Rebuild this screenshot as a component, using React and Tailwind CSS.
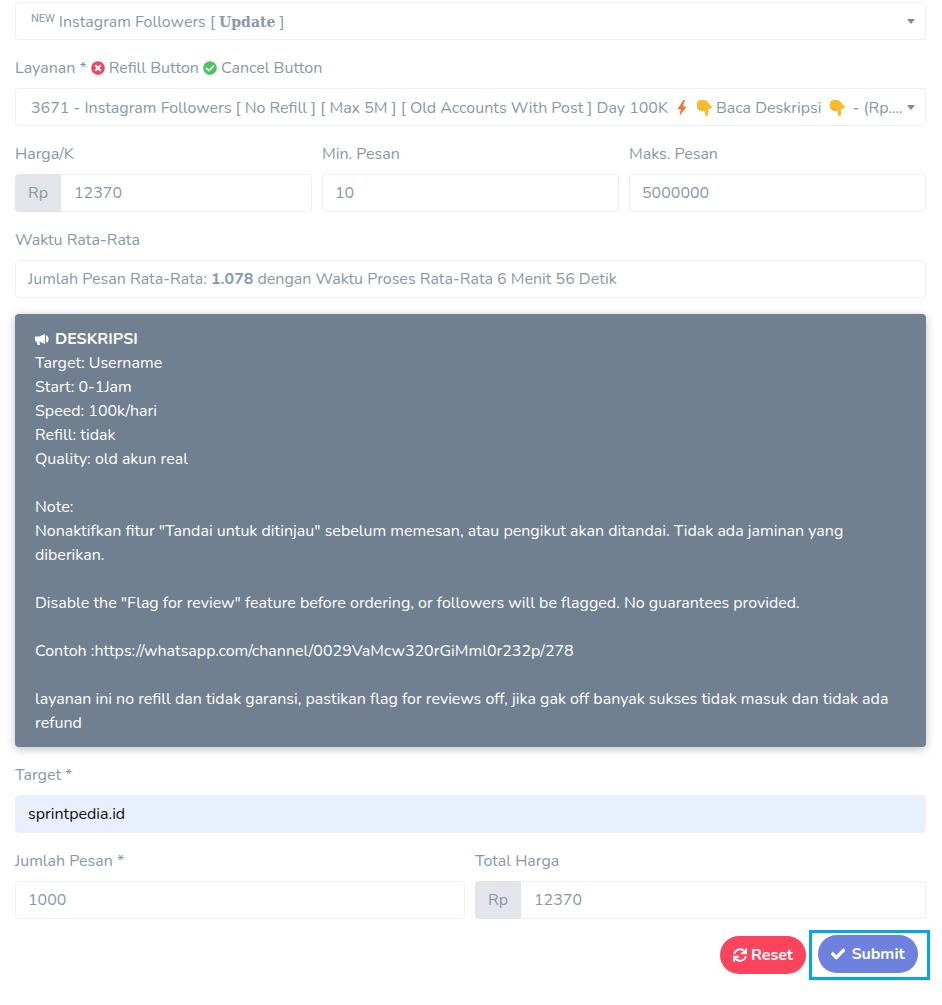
import React from 'react';
import { FaTimesCircle, FaCheckCircle, FaSync, FaCheck } from 'react-icons/fa';

const labelCls = 'block text-[#8898aa] text-[16px] leading-[22px] mb-[9px]';
const fieldCls = 'h-[38px] flex items-center border border-[#edf0f5] rounded-[4px] text-[#8898aa] text-[16px] px-3 min-w-0';

function Caret() {
  return <span className="absolute right-[10px] top-[16px] w-0 h-0 border-x-[4px] border-x-transparent border-t-[5px] border-t-[#888888]" />;
}

function Bolt() {
  return (
    <svg viewBox="0 0 10 16" className="w-[10px] h-[16px] ml-[9px] mr-[9px] inline-block shrink-0">
      <path d="M6.5 0 L0.5 9 L3.8 9 L2.5 16 L9.5 6.5 L5.8 6.5 L8 0 Z" fill="#f4732a" />
    </svg>
  );
}

function HandDown() {
  return (
    <svg viewBox="0 0 16 16" className="w-[16px] h-[16px] inline-block shrink-0">
      <path d="M1 3 C1 1 3 0 5 0 L8 0 C10 0 11 1 12 2.5 L16 7 C16 8.5 14 9 12 9 L12 14.5 C12 16.5 9 16.5 9 14.5 L9 11 C5 11 2 10.5 1 8 Z" fill="#fcbb2f" />
      <path d="M3.5 8 v2 M6 8.5 v2" stroke="#e29a12" strokeWidth="0.8" />
    </svg>
  );
}

function Megaphone() {
  return (
    <svg viewBox="0 0 14 11" className="w-[14px] h-[11px] mr-[6px] shrink-0" fill="#ffffff">
      <path d="M0 2.5 H4.5 L10 0 V10 L4.5 7.5 H4.3 L5.2 11 H2.6 L1.7 7.5 H0 Z" />
      <path d="M11 1 C14.5 2.5 14.5 7.5 11 9 Z" />
    </svg>
  );
}

function RpInput({ value }) {
  return (
    <div className="flex">
      <div className="h-[38px] w-[46px] shrink-0 flex items-center justify-center bg-[#e3e5ea] border border-[#e3e5ea] rounded-l-[4px] text-[#8898aa] text-[16px]">Rp</div>
      <div className={`${fieldCls} flex-1 rounded-l-none border-l-0 pl-[13px]`}>{value}</div>
    </div>
  );
}

export default function App() {
  return (
    <div className="bg-white min-h-[1005px] pl-[15px] pr-[16px] pt-[2px] font-['Nunito','Lato','Noto_Sans',sans-serif]">
      <div className={`${fieldCls} relative px-[15px] pt-[2px]`}>
        <span className="font-['Roboto',sans-serif] text-[11px] leading-none -translate-y-[4px] mr-[4px]">NEW</span>
        <span>Instagram Followers [ <span className="font-['DejaVu_Serif',serif] font-bold text-[14px]">Update</span> ]</span>
        <Caret />
      </div>

      <div className="mt-[17px] flex items-center text-[#8898aa] text-[16px] leading-[22px]">
        Layanan *
        <FaTimesCircle className="text-[#f5425c] text-[14px] mx-[4px]" />
        Refill Button
        <FaCheckCircle className="text-[#47c363] text-[14px] mx-[4px]" />
        Cancel Button
      </div>

      <div className={`${fieldCls} relative mt-[9px] pl-[15px] pr-[24px] pt-[1px] whitespace-nowrap overflow-hidden`}>
        <span>3671 - Instagram Followers [ No Refill ] [ Max 5M ] [ Old Accounts With Post ] Day 100K</span>
        <Bolt />
        <HandDown />
        <span className="ml-[4px]">Baca Deskripsi</span>
        <span className="ml-[8px] flex"><HandDown /></span>
        <span className="ml-[7px]">- (Rp....</span>
        <Caret />
      </div>

      <div className="mt-[17px] grid grid-cols-3 gap-[10px]">
        <div>
          <label className={labelCls}>Harga/K</label>
          <RpInput value="12370" />
        </div>
        <div>
          <label className={labelCls}>Min. Pesan</label>
          <div className={fieldCls}>10</div>
        </div>
        <div>
          <label className={labelCls}>Maks. Pesan</label>
          <div className={fieldCls}>5000000</div>
        </div>
      </div>

      <div className="mt-[17px]">
        <label className={labelCls}>Waktu Rata-Rata</label>
        <div className={fieldCls}>
          <span>Jumlah Pesan Rata-Rata: <b className="font-bold">1.078</b> dengan Waktu Proses Rata-Rata 6 Menit 56 Detik</span>
        </div>
      </div>

      <div className="mt-[16px] bg-[#708090] rounded-[4px] shadow-[0_2px_10px_rgba(0,0,0,0.25)] px-[20px] pt-[13px] pb-[12px] text-white text-[16px] leading-[24px]">
        <div className="flex items-center font-bold">
          <Megaphone />
          DESKRIPSI
        </div>
        <div>Target: Username</div>
        <div>Start: 0-1Jam</div>
        <div>Speed: 100k/hari</div>
        <div>Refill: tidak</div>
        <div>Quality: old akun real</div>
        <div className="h-[24px]" />
        <div>Note:</div>
        <div>Nonaktifkan fitur "Tandai untuk ditinjau" sebelum memesan, atau pengikut akan ditandai. Tidak ada jaminan yang diberikan.</div>
        <div className="h-[24px]" />
        <div>Disable the "Flag for review" feature before ordering, or followers will be flagged. No guarantees provided.</div>
        <div className="h-[24px]" />
        <div>Contoh :https://whatsapp.com/channel/0029VaMcw320rGiMml0r232p/278</div>
        <div className="h-[24px]" />
        <div>layanan ini no refill dan tidak garansi, pastikan flag for reviews off, jika gak off banyak sukses tidak masuk dan tidak ada refund</div>
      </div>

      <div className="mt-[17px]">
        <label className={labelCls}>Target *</label>
        <div className={`${fieldCls} bg-[#e8f0fe] border-[#e8f0fe] !text-[#111111]`}>sprintpedia.id</div>
      </div>

      <div className="mt-[17px] grid grid-cols-[450px_1fr] gap-[10px]">
        <div>
          <label className={labelCls}>Jumlah Pesan *</label>
          <div className={fieldCls}>1000</div>
        </div>
        <div>
          <label className={labelCls}>Total Harga</label>
          <RpInput value="12370" />
        </div>
      </div>

      <div className="mt-[11px] flex justify-end items-center">
        <button className="h-[38px] w-[86px] rounded-full bg-[#fc445c] text-white font-bold text-[16px] flex items-center justify-center gap-[4px] mr-[3px]">
          <FaSync className="text-[14px]" />
          Reset
        </button>
        <div className="border-[3px] border-[#00a8e8] pl-[6px] pr-[9px] pt-[2px] pb-[4px] -mr-[4px]">
          <button className="h-[38px] w-[100px] rounded-full bg-[#6f81de] text-white font-bold text-[16px] flex items-center justify-center gap-[6px]">
            <FaCheck className="text-[14px] stroke-white stroke-[30]" />
            Submit
          </button>
        </div>
      </div>
    </div>
  );
}
